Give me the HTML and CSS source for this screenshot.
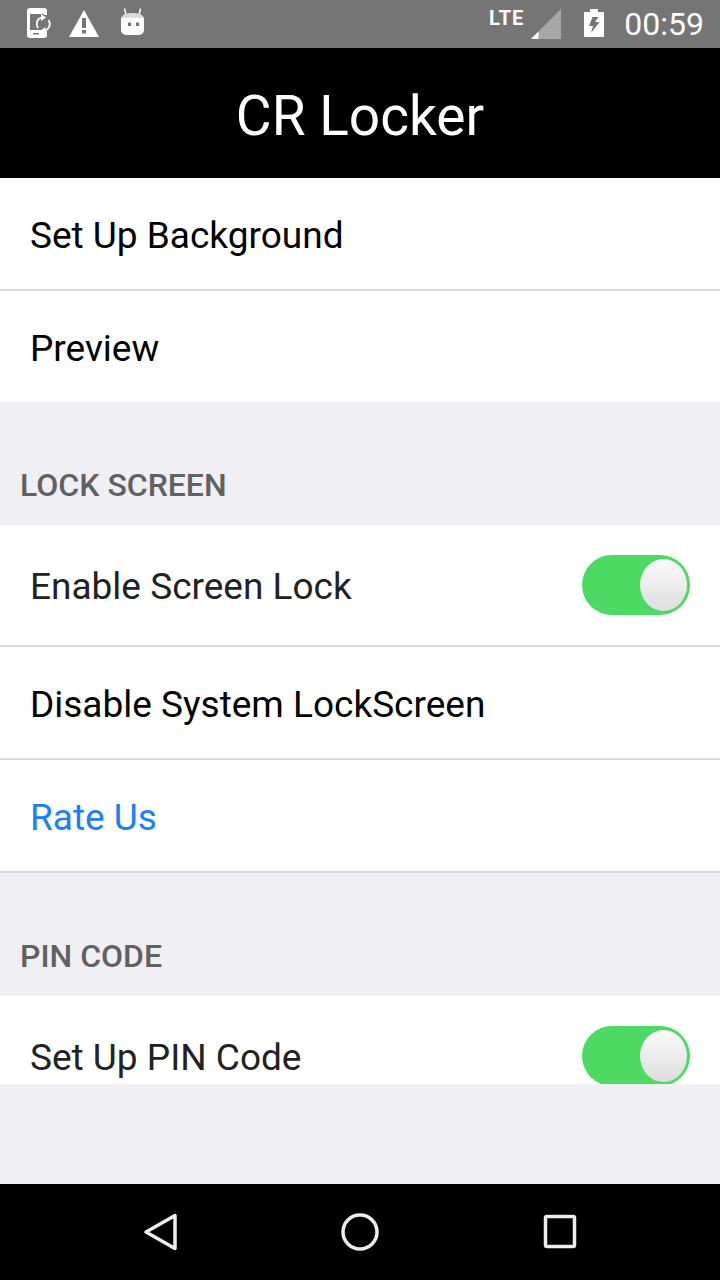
FILE: index.html
```html
<!DOCTYPE html>
<html lang="en">
<head>
<meta charset="utf-8">
<title>CR Locker</title>
<link rel="stylesheet" href="styles.css">
</head>
<body>
<div class="phone">
  <div class="status">
    <div class="status-left">
      <svg class="ic-phone" width="26" height="48" viewBox="0 0 26 48"><path fill="#fff" fill-rule="evenodd" d="M4 8h14a3 3 0 0 1 3 3v4h-3v-1H4v16h14h3v5a3 3 0 0 1-3 3H4a3 3 0 0 1-3-3V11a3 3 0 0 1 3-3zM7 33v1.500h6V33z"/><path fill="none" stroke="#fff" stroke-width="1.800" d="M12 28a7 7 0 0 1 3-10.500M22.500 20a7 7 0 0 1-3 10.500"/><path fill="#fff" d="M15 14l5 3.500-5 3.500zM19.500 34l-5-3.500 5-3.500z"/></svg>
      <svg class="ic-warn" width="30" height="48" viewBox="0 0 30 48"><path fill="#fff" fill-rule="evenodd" d="M15 10l15 27H0zM13 18v10h4V18zM13 30v3.500h4V30z"/></svg>
      <svg class="ic-droid" width="24" height="48" viewBox="0 0 24 48"><path fill="none" stroke="#fff" stroke-width="1.500" d="M5 15L3.500 8.500M18 15l1.500-6.500"/><path fill="#dcdcdc" d="M0 19c0-4 5-6 11.500-6S23 15 23 19z"/><path fill="#fff" fill-rule="evenodd" d="M0 18h23v12a5 5 0 0 1-5 5H5a5 5 0 0 1-5-5zM7 22.500v3.500h3v-3.500zM15 22.500v3.500h3v-3.500z"/></svg>
    </div>
    <div class="status-right">
      <span class="lte">LTE</span>
      <svg class="ic-signal" width="30" height="48" viewBox="0 0 30 48"><path fill="#a6a6a6" d="M30 9v30H0z"/><path fill="#fff" d="M7.500 31.500V39H0z"/></svg>
      <svg class="ic-batt" width="20" height="48" viewBox="0 0 20 48"><path fill="#fff" fill-rule="evenodd" d="M6 9h8v3h6v25H0V12h6zM8.500 17L5 26h4l-2 7 8.500-11H11l3.500-5z"/></svg>
      <span class="clock">00:59</span>
    </div>
  </div>
  <header class="title">CR Locker</header>
  <main class="content">
    <section class="group">
      <div class="row row-a">Set Up Background</div>
      <div class="row row-b">Preview</div>
    </section>
    <h2 class="section-label">LOCK SCREEN</h2>
    <section class="group">
      <div class="row row-c"><span>Enable Screen Lock</span><span class="switch"><span class="knob"></span></span></div>
      <div class="row row-a">Disable System LockScreen</div>
      <div class="row row-a link">Rate Us</div>
    </section>
    <h2 class="section-label">PIN CODE</h2>
    <section class="group group-cut">
      <div class="row row-c"><span>Set Up PIN Code</span><span class="switch"><span class="knob"></span></span></div>
    </section>
  </main>
  <nav class="navbar">
    <svg width="38" height="38" viewBox="0 0 38 38"><path fill="none" stroke="#eee" stroke-width="3.500" stroke-linejoin="round" d="M33 2.500v33L4 19z"/></svg>
    <svg width="38" height="38" viewBox="0 0 38 38"><circle cx="19" cy="19" r="17" fill="none" stroke="#eee" stroke-width="3.500"/></svg>
    <svg width="38" height="38" viewBox="0 0 38 38"><rect x="5.500" y="3.500" width="29" height="30" rx="1.500" fill="none" stroke="#eee" stroke-width="3.500"/></svg>
  </nav>
</div>
</body>
</html>
```
FILE: styles.css
```css
* { box-sizing: border-box; }
html, body { margin: 0; padding: 0; }
body { font-family: Roboto, "Noto Sans", sans-serif; background: #efeff4; }
.phone { width: 720px; height: 1280px; display: flex; flex-direction: column; overflow: hidden; background: #efeff4; }
.status { height: 48px; flex: none; background: #757575; display: flex; justify-content: space-between; align-items: center; padding: 0 16px 0 26px; }
.status-left { display: flex; align-items: center; }
.status-right { display: flex; align-items: center; }
.ic-warn { margin-left: 17px; }
.ic-droid { margin-left: 22px; }
.lte { color: #fff; font-size: 20px; font-weight: 700; letter-spacing: 1px; margin-top: -12px; }
.ic-signal { margin-left: 7px; }
.ic-batt { margin-left: 23px; }
.clock { color: #fff; font-size: 32px; margin-left: 20px; }
.title { height: 130px; flex: none; background: #000; color: #fff; font-size: 55px; padding-top: 6px; display: flex; align-items: center; justify-content: center; }
.content { flex: 1; min-height: 0; }
.group { background: #fff; }
.row { display: flex; align-items: center; justify-content: space-between; padding: 4px 30px 0; font-size: 37px; color: #000; background: #fff; }
.row-a { height: 113px; border-bottom: 2px solid #d9d9dc; }
.row-b { height: 111px; }
.row-c { height: 122px; border-bottom: 2px solid #d9d9dc; padding-top: 0; color: #222; }
.row-c > span:first-child { padding-top: 2px; }
.link { color: #1b80f5; }
.section-label { margin: 0; height: 123px; padding: 64px 0 0 20px; font-size: 32px; line-height: 38px; font-weight: 500; color: #616161; }
.group-cut { height: 88px; overflow: hidden; }
.switch { width: 108px; height: 60px; border-radius: 30px; background: #4cd964; display: block; padding: 4px 2px 4px 0; flex: none; }
.knob { display: block; width: 47px; height: 52px; margin-left: 58px; border-radius: 50%; background: linear-gradient(#fafafa, #dedede); }
.navbar { height: 96px; flex: none; background: #000; display: flex; justify-content: space-between; align-items: center; padding: 0 142px; }
```
